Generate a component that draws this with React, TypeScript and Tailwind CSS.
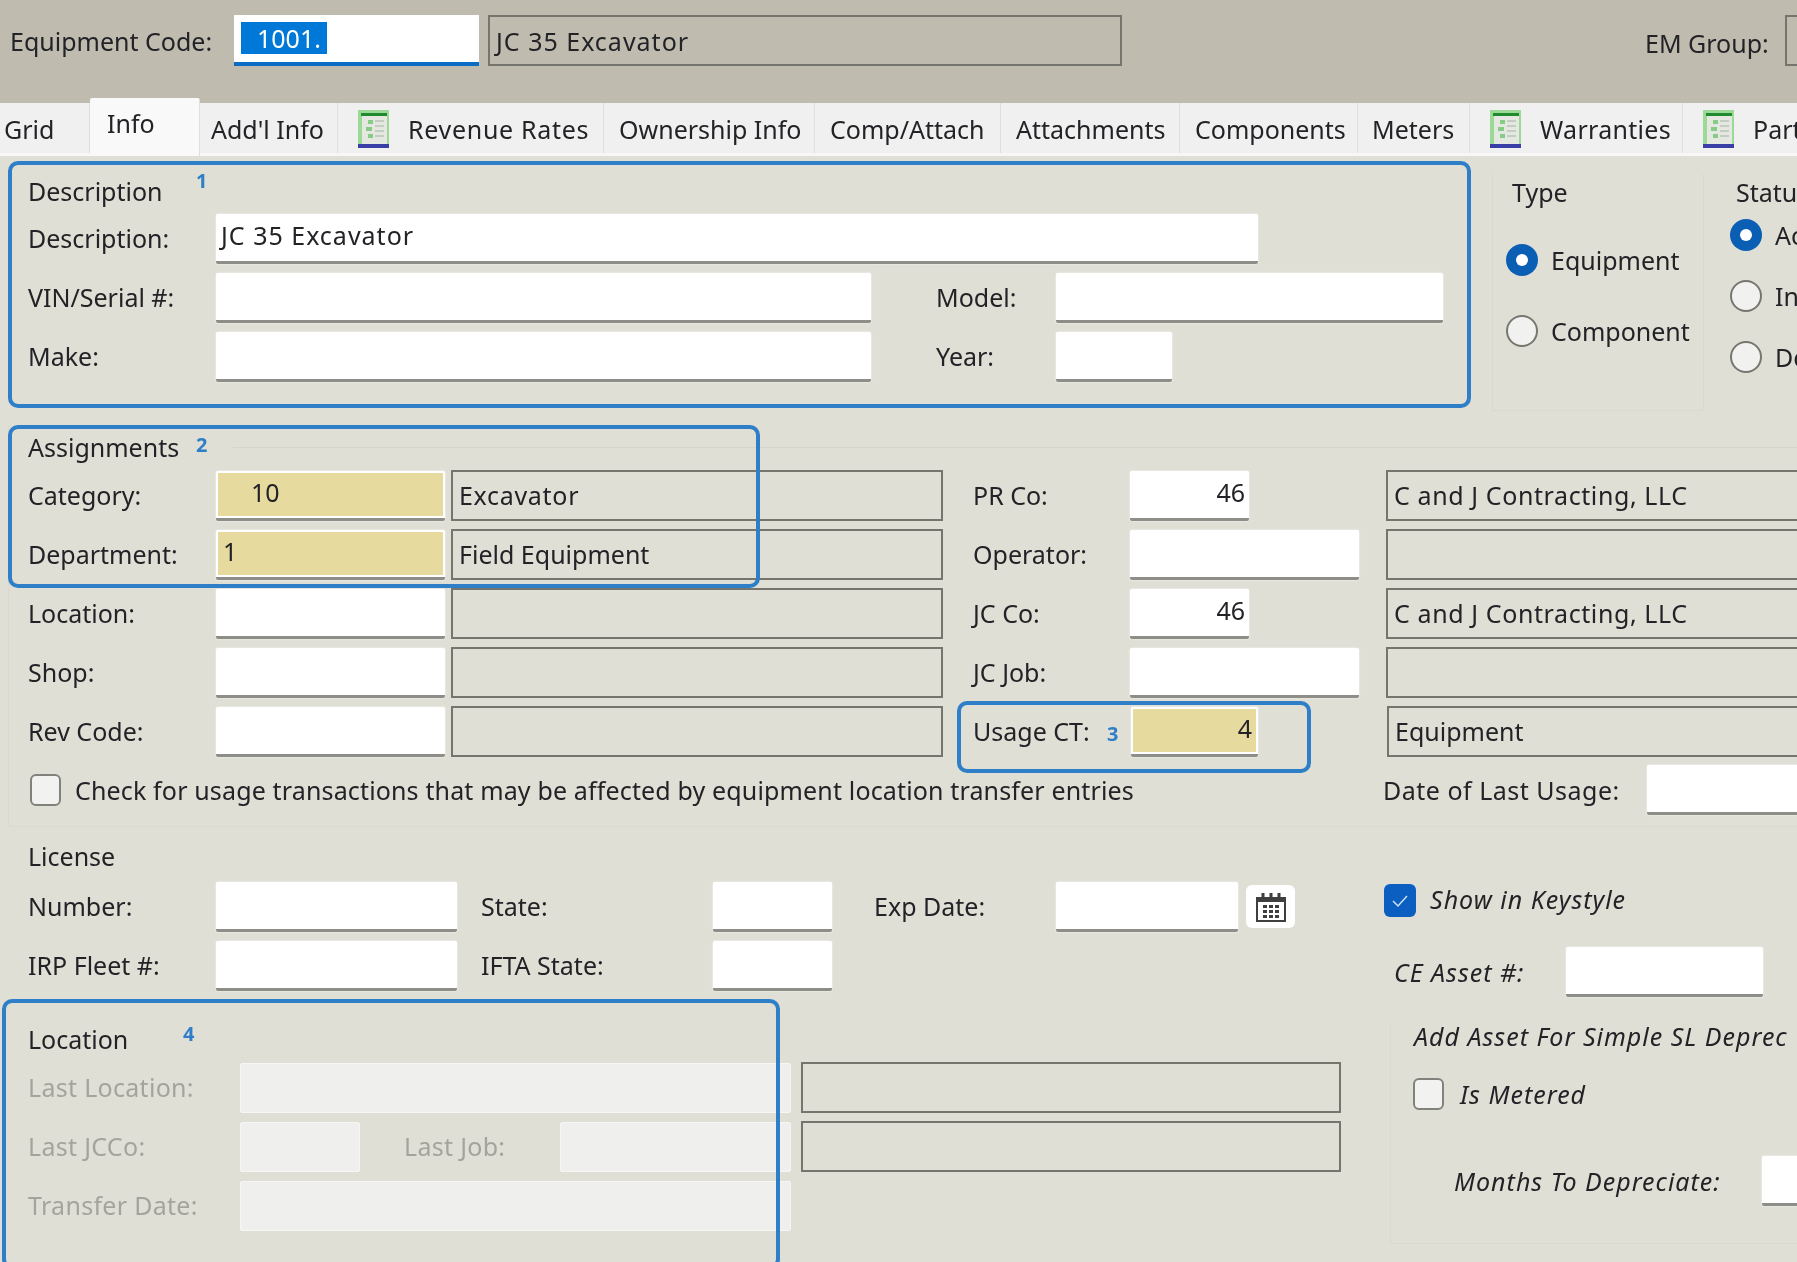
import type { ReactNode } from "react";

const FONT = "font-['Noto_Sans',sans-serif]";

function Field({
  className = "",
  value,
  tan,
  right,
  inset = "pl-[5px]",
}: {
  className?: string;
  value?: string;
  tan?: boolean;
  right?: boolean;
  inset?: string;
}) {
  return (
    <div
      className={`h-[50px] shrink-0 bg-white border-b-[3px] border-[#8e8e88] rounded-[2px] shadow-[0_0_2px_#ffffff] ${tan ? "p-[2px]" : ""} ${className}`}
    >
      <div
        className={`h-full flex items-center pb-[3px] ${tan ? "bg-[#e6da9f]" : ""} ${right ? "justify-end pr-[4px]" : inset}`}
      >
        {value}
      </div>
    </div>
  );
}

function NameBox({ className = "", value }: { className?: string; value?: string }) {
  return (
    <div
      className={`h-[51px] shrink-0 flex items-center pl-[6px] border-2 border-[#75756e] ${className}`}
    >
      {value}
    </div>
  );
}

function Disabled({ className = "" }: { className?: string }) {
  return <div className={`h-[50px] shrink-0 bg-[#efefed] border border-[#f6f6f4] rounded-[2px] ${className}`} />;
}

function Row({ children, className = "" }: { children: ReactNode; className?: string }) {
  return <div className={`h-[51px] mb-[8px] flex items-center ${className}`}>{children}</div>;
}

function Label({ children, className = "w-[188px]" }: { children: ReactNode; className?: string }) {
  return <div className={`shrink-0 whitespace-nowrap ${className}`}>{children}</div>;
}

function Radio({ on }: { on?: boolean }) {
  return on ? (
    <div className="w-[32px] h-[32px] shrink-0 rounded-full bg-[#0a5fb4] flex items-center justify-center">
      <div className="w-[12px] h-[12px] rounded-full bg-white" />
    </div>
  ) : (
    <div className="w-[32px] h-[32px] shrink-0 rounded-full bg-[#f1f1ef] border-2 border-[#777770]" />
  );
}

function Checkbox({ on }: { on?: boolean }) {
  return on ? (
    <div className="w-[32px] h-[33px] shrink-0 rounded-[6px] bg-[#0a5fc0] flex items-center justify-center">
      <svg width="18" height="14" viewBox="0 0 18 14" fill="none" stroke="#cfe2f7" strokeWidth="1.5">
        <path d="M2 7l5 5 9-10" />
      </svg>
    </div>
  ) : (
    <div className="w-[31px] h-[32px] shrink-0 rounded-[6px] bg-[#f2f2f0] border-2 border-[#82827c]" />
  );
}

function SheetIcon() {
  return (
    <svg width="31" height="38" viewBox="0 0 31 38" className="shrink-0">
      <rect x="0" y="0" width="31" height="38" fill="#9bd996" />
      <rect x="4" y="3" width="25" height="31" fill="#e4e8e1" />
      <rect x="3" y="3" width="26" height="3" fill="#1f8a2e" />
      <path d="M10 10h5v4h-5zM8 17h6v4H8zM10 24h5v4h-5z" fill="#86cc86" />
      <path d="M17 10h9v2h-9zM17 15h9v2h-9zM17 20h9v2h-9zM17 25h9v2h-9z" fill="#c4cdc1" />
      <rect x="0" y="34" width="31" height="4" fill="#3a3fa8" />
    </svg>
  );
}

function CalendarIcon() {
  return (
    <svg width="32" height="30" viewBox="0 0 32 30" fill="none">
      <rect x="2" y="6" width="28" height="23" stroke="#3f3f3f" strokeWidth="2" />
      <rect x="2" y="6" width="28" height="4" fill="#3f3f3f" />
      <path d="M8 1v7M16 1v7M24 1v7" stroke="#3f3f3f" strokeWidth="3" />
      <path
        d="M8 13h4v3H8zM14 13h4v3h-4zM20 13h4v3h-4zM8 18h4v3H8zM14 18h4v3h-4zM20 18h4v3h-4zM8 23h4v3H8zM14 23h4v3h-4zM20 23h4v3h-4z"
        fill="#3f3f3f"
      />
    </svg>
  );
}

const tabs: { name: string; w: string; icon?: boolean; pad: string; track?: string }[] = [
  { name: "Grid", w: "w-[90px]", pad: "pl-[4px]" },
  { name: "Info", w: "w-[110px]", pad: "pl-[17px]" },
  { name: "Add'l Info", w: "w-[138px]", pad: "pl-[11px]" },
  { name: "Revenue Rates", w: "w-[266px]", icon: true, pad: "pl-[20px]", track: "tracking-[0.7px]" },
  { name: "Ownership Info", w: "w-[211px]", pad: "pl-[15px]" },
  { name: "Comp/Attach", w: "w-[186px]", pad: "pl-[15px]" },
  { name: "Attachments", w: "w-[179px]", pad: "pl-[15px]" },
  { name: "Components", w: "w-[178px]", pad: "pl-[15px]" },
  { name: "Meters", w: "w-[112px]", pad: "pl-[14px]" },
  { name: "Warranties", w: "w-[213px]", icon: true, pad: "pl-[20px]", track: "tracking-[0.3px]" },
  { name: "Parts", w: "w-[130px]", icon: true, pad: "pl-[20px]" },
];

function Note({ className, n }: { className: string; n: string }) {
  return (
    <div className={`absolute text-[20px] leading-none font-bold text-[#2e7ec8] ${className}`}>{n}</div>
  );
}

export default function App() {
  return (
    <div
      className={`relative w-[1797px] h-[1262px] overflow-hidden bg-[#dfdfd6] text-[#232327] text-[25px] leading-none [filter:blur(0.45px)] ${FONT}`}
    >
      {/* header */}
      <div className="h-[103px] bg-[#bfbcaf] pt-[15px] flex items-start">
        <Label className="w-[234px] pl-[10px] mt-[14px]">Equipment Code:</Label>
        <div className="w-[245px] h-[51px] shrink-0 bg-white border-b-[4px] border-[#0a6cc4] pl-[7px] pt-[7px]">
          <div className="w-[86px] h-[32px] bg-[#0078d7] text-white flex items-center pl-[16px]">1001.</div>
        </div>
        <NameBox className="ml-[9px] w-[634px] pt-[2px] tracking-[1px]" value="JC 35 Excavator" />
        <Label className="ml-[523px] mt-[16px]">EM Group:</Label>
        <div className="ml-[16px] w-[60px] h-[51px] shrink-0 border-2 border-[#75756e]" />
      </div>

      {/* tabs */}
      <div className="h-[53px] bg-[#f0f0f0] border-b-[3px] border-[#f7f7f7] flex relative">
        {tabs.map((t) => (
          <div
            key={t.name}
            className={`${t.w} shrink-0 flex items-center gap-[19px] border-r border-[#dfdfdc] ${t.pad} ${t.track ?? ""} ${
              t.name === "Info"
                ? "h-[58px] mt-[-5px] bg-[#f9f9f9] rounded-t-[2px] pb-[8px]"
                : "h-[50px] pt-[2px]"
            }`}
          >
            {t.icon && <SheetIcon />}
            {t.name}
          </div>
        ))}
      </div>

      {/* description, type, status */}
      <div className="h-[269px] flex">
        <div className="w-[1490px] shrink-0 pl-[28px]">
          <div className="h-[57px] pt-[23px]">Description</div>
          <Row>
            <Label>Description:</Label>
            <Field className="w-[1042px] tracking-[1px]" value="JC 35 Excavator" />
          </Row>
          <Row>
            <Label>VIN/Serial #:</Label>
            <Field className="w-[655px]" />
            <Label className="w-[185px] pl-[65px]">Model:</Label>
            <Field className="w-[387px]" />
          </Row>
          <Row>
            <Label>Make:</Label>
            <Field className="w-[655px]" />
            <Label className="w-[185px] pl-[65px]">Year:</Label>
            <Field className="w-[116px]" />
          </Row>
        </div>
        <div className="w-[212px] shrink-0 ml-[2px] mt-[18px] mb-[14px] border border-[#d9d9d0] border-t-0 pl-[13px]">
          <div className="mt-[6px] pl-[6px]">Type</div>
          <div className="flex items-center gap-[13px] mt-[39px]">
            <Radio on />
            Equipment
          </div>
          <div className="flex items-center gap-[13px] mt-[39px]">
            <Radio />
            Component
          </div>
        </div>
        <div className="ml-[14px] mt-[18px] pl-[12px] w-[200px]">
          <div className="mt-[6px] ml-[6px]">Status</div>
          <div className="flex items-center gap-[13px] mt-[14px]">
            <Radio on />
            Active
          </div>
          <div className="flex items-center gap-[13px] mt-[29px]">
            <Radio />
            Inactive
          </div>
          <div className="flex items-center gap-[13px] mt-[29px]">
            <Radio />
            Down
          </div>
        </div>
      </div>

      {/* assignments */}
      <div className="ml-[8px] h-[402px] border-l border-b border-[#d9d9d0] pl-[19px]">
        <div className="h-[45px] pt-[10px] flex items-start gap-[24px]">
          Assignments
          <div className="flex-1 h-px mt-[12px] ml-[30px] bg-[#d6d6ce]" />
        </div>
        <Row>
          <Label>Category:</Label>
          <Field className="w-[229px]" tan value="10" inset="pl-[33px]" />
          <NameBox className="ml-[6px] w-[492px] tracking-[0.7px]" value="Excavator" />
          <Label className="w-[187px] pl-[30px]">PR Co:</Label>
          <Field className="w-[119px]" right value="46" />
          <NameBox className="ml-[137px] w-[500px] tracking-[0.6px]" value="C and J Contracting, LLC" />
        </Row>
        <Row>
          <Label>Department:</Label>
          <Field className="w-[229px]" tan value="1" />
          <NameBox className="ml-[6px] w-[492px]" value="Field Equipment" />
          <Label className="w-[187px] pl-[30px]">Operator:</Label>
          <Field className="w-[229px]" />
          <NameBox className="ml-[27px] w-[500px]" />
        </Row>
        <Row>
          <Label>Location:</Label>
          <Field className="w-[229px]" />
          <NameBox className="ml-[6px] w-[492px]" />
          <Label className="w-[187px] pl-[30px]">JC Co:</Label>
          <Field className="w-[119px]" right value="46" />
          <NameBox className="ml-[137px] w-[500px] tracking-[0.6px]" value="C and J Contracting, LLC" />
        </Row>
        <Row>
          <Label>Shop:</Label>
          <Field className="w-[229px]" />
          <NameBox className="ml-[6px] w-[492px]" />
          <Label className="w-[187px] pl-[30px]">JC Job:</Label>
          <Field className="w-[229px]" />
          <NameBox className="ml-[27px] w-[500px]" />
        </Row>
        <Row>
          <Label>Rev Code:</Label>
          <Field className="w-[229px]" />
          <NameBox className="ml-[6px] w-[492px]" />
          <Label className="w-[188px] pl-[30px]">Usage CT:</Label>
          <Field className="w-[127px]" tan right value="4" />
          <NameBox className="ml-[129px] w-[500px]" value="Equipment" />
        </Row>
        <div className="h-[50px] mt-[2px] flex items-center">
          <div className="ml-[2px]">
            <Checkbox />
          </div>
          <div className="ml-[14px] w-[1308px] shrink-0 whitespace-nowrap tracking-[0.15px]">
            Check for usage transactions that may be affected by equipment location transfer entries
          </div>
          <Label className="w-[264px] tracking-[0.5px]">Date of Last Usage:</Label>
          <Field className="w-[200px]" />
        </div>
      </div>

      {/* license, location, asset */}
      <div className="flex">
        <div className="w-[1384px] shrink-0 pl-[28px]">
          <div className="h-[54px] pt-[17px]">License</div>
          <Row>
            <Label>Number:</Label>
            <Field className="w-[241px]" />
            <Label className="w-[256px] pl-[24px]">State:</Label>
            <Field className="w-[119px]" />
            <Label className="w-[224px] pl-[42px]">Exp Date:</Label>
            <Field className="w-[182px]" />
            <div className="ml-[8px] w-[49px] h-[43px] bg-white rounded-[6px] flex items-center justify-center">
              <CalendarIcon />
            </div>
          </Row>
          <Row>
            <Label>IRP Fleet #:</Label>
            <Field className="w-[241px]" />
            <Label className="w-[256px] pl-[24px]">IFTA State:</Label>
            <Field className="w-[119px]" />
          </Row>
          <div className="h-[63px] pt-[28px]">Location</div>
          <div className="text-[#a4a49e] tracking-[0.3px]">
            <Row>
              <Label className="w-[212px]">Last Location:</Label>
              <Disabled className="w-[551px]" />
              <NameBox className="ml-[10px] w-[540px]" />
            </Row>
            <Row>
              <Label className="w-[212px]">Last JCCo:</Label>
              <Disabled className="w-[120px]" />
              <Label className="w-[200px] pl-[44px]">Last Job:</Label>
              <Disabled className="w-[231px]" />
              <NameBox className="ml-[10px] w-[540px]" />
            </Row>
            <Row>
              <Label className="w-[212px]">Transfer Date:</Label>
              <Disabled className="w-[551px]" />
            </Row>
          </div>
        </div>

        <div className="flex-1 italic pt-[57px] tracking-[1px]">
          <div className="flex items-center gap-[14px]">
            <Checkbox on />
            <span className="mt-[-3px]">Show in Keystyle</span>
          </div>
          <div className="flex items-center mt-[30px] pl-[10px]">
            <Label className="w-[172px]">CE Asset #:</Label>
            <Field className="w-[197px]" />
          </div>
          <div className="mt-[27px] ml-[6px] h-[220px] border-l border-b border-[#d9d9d0] pl-[23px] whitespace-nowrap">
            Add Asset For Simple SL Deprec
            <div className="flex items-center gap-[16px] mt-[29px] ml-[-1px]">
              <Checkbox />
              Is Metered
            </div>
            <div className="flex items-center mt-[46px] pl-[40px]">
              <Label className="w-[308px]">Months To Depreciate:</Label>
              <Field className="w-[60px]" />
            </div>
          </div>
        </div>
      </div>

      {/* numbered callouts */}
      <div className="absolute left-[8px] top-[161px] w-[1463px] h-[247px] rounded-[10px] border-[4px] border-[#2e7ec8]" />
      <div className="absolute left-[8px] top-[425px] w-[752px] h-[163px] rounded-[10px] border-[4px] border-[#2e7ec8]" />
      <div className="absolute left-[957px] top-[701px] w-[354px] h-[72px] rounded-[10px] border-[4px] border-[#2e7ec8]" />
      <div className="absolute left-[2px] top-[999px] w-[778px] h-[270px] rounded-[10px] border-[4px] border-[#2e7ec8]" />
      <Note className="left-[196px] top-[171px]" n="1" />
      <Note className="left-[196px] top-[435px]" n="2" />
      <Note className="left-[1107px] top-[724px]" n="3" />
      <Note className="left-[183px] top-[1024px]" n="4" />
    </div>
  );
}
